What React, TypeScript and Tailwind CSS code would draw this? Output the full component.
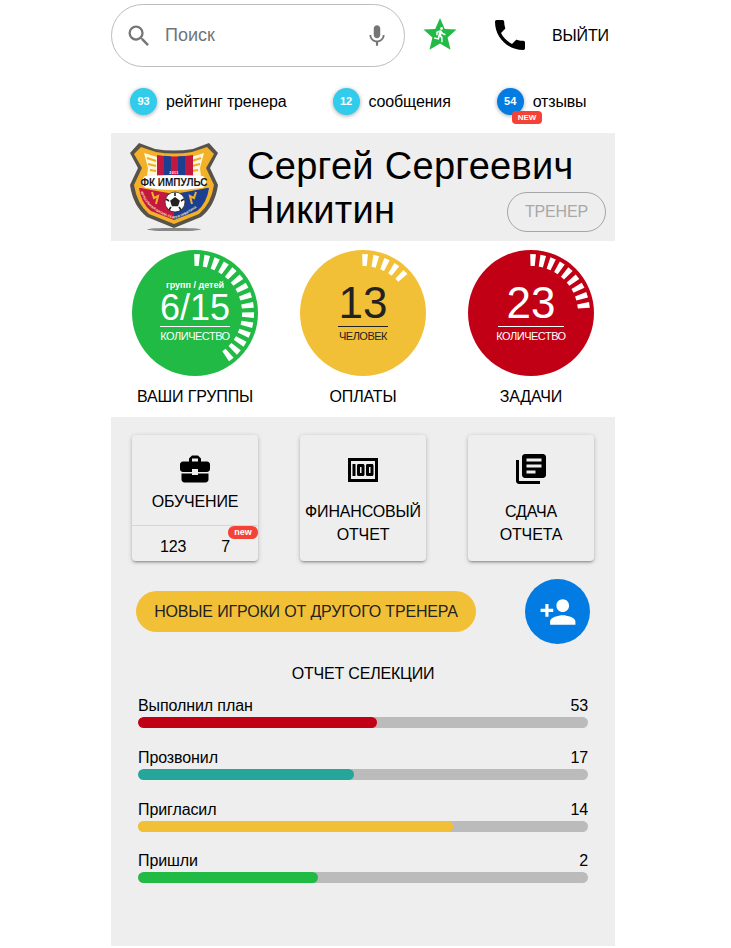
import React from "react";
import { MdSearch, MdMic, MdPhone, MdBusinessCenter, MdMoney, MdLibraryBooks, MdPersonAdd, MdDirectionsRun } from "react-icons/md";

function Ticks({ count, step, start = 2 }: { count: number; step: number; start?: number }) {
  const c = 63;
  const polys = Array.from({ length: count }, (_, i) => {
    const a = ((start + i * step) * Math.PI) / 180;
    const ux = Math.sin(a), uy = -Math.cos(a), px = Math.cos(a), py = Math.sin(a);
    const ro = 59, ri = 47, wo = 2.9, wi = 2.1;
    const pts = [
      [c + ux * ro - px * wo, c + uy * ro - py * wo],
      [c + ux * ro + px * wo, c + uy * ro + py * wo],
      [c + ux * ri + px * wi, c + uy * ri + py * wi],
      [c + ux * ri - px * wi, c + uy * ri - py * wi],
    ];
    return pts.map((p) => p.join(",")).join(" ");
  });
  return (
    <svg className="absolute inset-0" width="126" height="126" viewBox="0 0 126 126">
      {polys.map((p, i) => (
        <polygon key={i} points={p} fill="#fff" />
      ))}
    </svg>
  );
}

function Logo() {
  return (
    <svg width="100" height="100" viewBox="0 0 100 100">
      <ellipse cx="49" cy="91.5" rx="27" ry="1.6" fill="#444" opacity="0.6" />
      <path d="M14 5 L30 11 Q49 14 68 11 L84 5 L93 15 L85 30 L93 47 Q90 68 76 79 L49 90 L22 79 Q8 68 5 47 L13 30 L5 15 Z" fill="#57534a" />
      <path d="M16 9 L31 14 Q49 17 67 14 L82 9 L89 16 L81 30 L89 47 Q86 66 74 76 L49 86 L24 76 Q12 66 9 47 L17 30 L9 16 Z" fill="#f3b12a" />
      <path d="M19 15 L32 19 L32 38 L22 38 L23 30 Z M79 15 L66 19 L66 38 L76 38 L75 30 Z" fill="#fff6dc" />
      <path d="M22 20 L31 23 M23 26 L31 28 M25 32 L31 33 M76 20 L67 23 M75 26 L67 28 M73 32 L67 33" stroke="#f0ad24" strokeWidth="2.2" />
      <path d="M32 17 Q49 20 68 17 L68 38 L32 38 Z" fill="#c3173f" />
      <path d="M39 17.8 L46 18.4 L46 38 L39 38 Z M53 18.4 L60 17.9 L60 38 L53 38 Z" fill="#1c3f92" />
      <text x="49" y="35.5" textAnchor="middle" fontFamily="'Liberation Sans', sans-serif" fontWeight="700" fontSize="3.6" letterSpacing="0.4" fill="#fff">2011</text>
      <path d="M16 50 Q49 56 49 56 L49 82 L26 73 Q16 65 14 50 Z" fill="#c3173f" />
      <path d="M82 50 Q49 56 49 56 L49 82 L72 73 Q82 65 84 50 Z" fill="#1c3f92" />
      <path id="logo-arc" d="M15 52 Q20 72 49 81 Q78 72 83 52" fill="none" />
      <text fontFamily="'Liberation Sans', sans-serif" fontWeight="700" fontSize="3.3" fill="#f6e6b0">
        <textPath href="#logo-arc" startOffset="2%">ФУТБОЛЬНАЯ ШКОЛА СЕРГЕЯ НИКИТИНА</textPath>
      </text>
      <path d="M27 54 L29 60 L33 58 L31 66 M71 54 L69 60 L65 58 L67 66" stroke="#f3b12a" strokeWidth="2" fill="none" />
      <path d="M20 38 Q49 36 78 38 Q83 43 80 47 Q79 50 76 50 Q49 54 22 50 Q19 50 18 47 Q15 43 20 38 Z" fill="#fff" />
      <text x="49" y="47.5" textAnchor="middle" fontFamily="'Liberation Sans', sans-serif" fontWeight="700" fontSize="10" fill="#1a1a1a">ФК ИМПУЛЬС</text>
      <circle cx="50" cy="64" r="10" fill="#fff" stroke="#333" strokeWidth="0.8" />
      <path d="M50 60 L54 63 L52.5 67.5 L47.5 67.5 L46 63 Z M50 54.5 L50 58 M41 61 L44 63 M59 61 L56 63 M44 72 L46 69 M56 72 L54 69" fill="#222" stroke="#222" strokeWidth="1.6" />
    </svg>
  );
}

function Stat({ value, color, label }: { value: number; color: string; label: string }) {
  return (
    <div className="flex items-center">
      <span className={`flex h-[27px] w-[27px] items-center justify-center rounded-full text-[11px] font-bold text-white shadow-[0_1px_4px_rgba(0,0,0,0.35)] ${color}`}>
        {value}
      </span>
      <span className="ml-[9px] text-[16px] tracking-[-0.15px] text-black">{label}</span>
    </div>
  );
}

function Dial({ bg, fg, line, lineW, count, step, label, top, number, numberSize, caption }: {
  bg: string; fg: string; line: string; lineW: string; count: number; step: number; label: string; top?: string; number: string; numberSize: string; caption: string;
}) {
  return (
    <div className="flex w-[126px] flex-col items-center">
      <div className={`relative flex h-[126px] w-[126px] flex-col items-center rounded-full ${bg} ${fg}`}>
        <Ticks count={count} step={step} />
        <div className="mt-[30px]" />
        {top && <div className="h-[11px] text-[9px] font-bold leading-[11px] whitespace-nowrap">{top}</div>}
        <div className={`whitespace-nowrap ${top ? "h-[34px] leading-[34px]" : "h-[45px] leading-[45px]"} ${numberSize}`}>{number}</div>
        <div className={`mt-px h-px ${lineW} ${line}`} />
        <div className="mt-[3px] text-[11px] leading-[12px] tracking-[-0.5px] whitespace-nowrap">{caption}</div>
      </div>
      <div className="mt-[12px] text-[16px] leading-[18px] tracking-[-0.15px] whitespace-nowrap text-black">{label}</div>
    </div>
  );
}

function Card({ icon, children, footer }: { icon: React.ReactNode; children: React.ReactNode; footer?: boolean }) {
  return (
    <div className="relative flex h-[126px] w-[126px] flex-col items-center rounded-[4px] bg-[#eeeeee] text-[16px] tracking-[-0.15px] text-black shadow-[0_1px_5px_rgba(0,0,0,0.2),0_2px_2px_rgba(0,0,0,0.14),0_3px_1px_-2px_rgba(0,0,0,0.12)]">
      {icon}
      {children}
      {footer && (
        <>
          <div className="mt-[14px] h-px w-full bg-[#d6d6d6]" />
          <div className="flex w-full pt-[12px] leading-[18px]">
            <span className="ml-[28px]">123</span>
            <span className="ml-[35px]">7</span>
          </div>
          <span className="absolute right-0 top-[91px] flex h-[13px] w-[30px] items-center justify-center rounded-[6px] bg-[#f44336] text-[9px] font-bold tracking-normal text-white">new</span>
        </>
      )}
    </div>
  );
}

function Bar({ label, value, pct, color }: { label: string; value: number; pct: string; color: string }) {
  return (
    <div className="flex h-[51.8px] flex-col">
      <div className="flex h-[19px] justify-between text-[16px] leading-[19px] tracking-[-0.1px] text-black">
        <span>{label}</span>
        <span>{value}</span>
      </div>
      <div className="mt-[2px] h-[11px] overflow-hidden rounded-full bg-[#bbbbbb]">
        <div className={`h-full rounded-full ${color}`} style={{ width: pct }} />
      </div>
    </div>
  );
}

export default function App() {
  return (
    <div className="ml-[111px] flex min-h-[946px] w-[504px] flex-col bg-white font-['Liberation_Sans',Arial,sans-serif]">
      <div className="flex h-[88px] pt-[4px]">
        <div className="flex h-[63px] w-[294px] items-center rounded-full border border-[#bdbdbd] bg-white pl-[13px] pr-[14px]">
          <MdSearch size={28} className="text-[#757575]" />
          <span className="ml-[12px] text-[18px] text-[#70757a]">Поиск</span>
          <MdMic size={26} className="ml-auto text-[#757575]" />
        </div>
        <div className="relative ml-[18px] mt-[13px] h-[34px] w-[34px]">
          <svg width="34" height="34" viewBox="0 0 34 34">
            <polygon points="17,1 21.8,12 33.5,12.6 24.6,20.4 27.5,32.7 17,26.4 6.5,32.7 9.4,20.4 0.5,12.6 12.2,12" fill="#21ba45" />
          </svg>
          <MdDirectionsRun size={17} className="absolute left-[9px] top-[9px] text-white" />
        </div>
        <MdPhone size={40} className="ml-[33px] mt-[11px] text-black" />
        <span className="ml-[22px] mt-[22px] text-[16px] leading-[19px] tracking-[-0.15px] text-black">ВЫЙТИ</span>
      </div>

      <div className="relative flex h-[45px] items-start pl-[19px]">
        <Stat value={93} color="bg-[#31ccec]" label="рейтинг тренера" />
        <div className="ml-[46px]"><Stat value={12} color="bg-[#31ccec]" label="сообщения" /></div>
        <div className="ml-[46px]"><Stat value={54} color="bg-[#027be3]" label="отзывы" /></div>
        <span className="absolute left-[401px] top-[23px] flex h-[13px] w-[30px] items-center justify-center rounded-[4px] bg-[#f44336] text-[8px] font-bold text-white">NEW</span>
      </div>

      <div className="flex h-[108px] bg-[#eeeeee]">
        <div className="ml-[14px] mt-[5px] h-[100px] w-[100px]"><Logo /></div>
        <div className="relative ml-[22px] flex-1 pt-[11px] text-[38px] leading-[44px] tracking-[0.3px] text-black">
          <div className="whitespace-nowrap">Сергей Сергеевич</div>
          <div>Никитин</div>
          <span className="absolute right-[9px] top-[59px] flex h-[40px] w-[99px] items-center justify-center rounded-full border border-[#a5a5a5] text-[16px] tracking-[-0.15px] text-[#a8a8a8]">ТРЕНЕР</span>
        </div>
      </div>

      <div className="flex h-[176px] justify-between px-[21px] pt-[9px]">
        <Dial bg="bg-[#21ba45]" fg="text-white" line="bg-white" lineW="w-[70px]" count={15} step={10} label="ВАШИ ГРУППЫ" top="групп / детей" number="6/15" numberSize="text-[36px]" caption="КОЛИЧЕСТВО" />
        <Dial bg="bg-[#f2c037]" fg="text-[#222222]" line="bg-[#222222]" lineW="w-[50px]" count={5} step={11} label="ОПЛАТЫ" number="13" numberSize="text-[44px]" caption="ЧЕЛОВЕК" />
        <Dial bg="bg-[#c10015]" fg="text-white" line="bg-white" lineW="w-[66px]" count={9} step={10} label="ЗАДАЧИ" number="23" numberSize="text-[44px]" caption="КОЛИЧЕСТВО" />
      </div>

      <div className="flex flex-1 flex-col bg-[#eeeeee] pt-[18px]">
        <div className="flex justify-between px-[21px]">
          <Card icon={<MdBusinessCenter size={36} className="mt-[16px] text-black" />} footer>
            <div className="mt-[6px] leading-[18px]">ОБУЧЕНИЕ</div>
          </Card>
          <Card icon={<MdMoney size={36} className="mt-[17px] text-black" />}>
            <div className="mt-[12px] whitespace-nowrap text-center leading-[23px]">ФИНАНСОВЫЙ<br />ОТЧЕТ</div>
          </Card>
          <Card icon={<MdLibraryBooks size={36} className="mt-[16px] text-black" />}>
            <div className="mt-[13px] text-center leading-[23px]">СДАЧА<br />ОТЧЕТА</div>
          </Card>
        </div>

        <div className="mt-[18px] flex items-center pl-[25px]">
          <div className="flex h-[41px] w-[340px] items-center justify-center rounded-full bg-[#f2c037] text-[16px] tracking-[-0.16px] text-[#222222]">НОВЫЕ ИГРОКИ ОТ ДРУГОГО ТРЕНЕРА</div>
          <div className="ml-[49px] flex h-[65px] w-[65px] items-center justify-center rounded-full bg-[#027be3]">
            <MdPersonAdd size={38} className="text-white" />
          </div>
        </div>

        <div className="mt-[20px] text-center text-[16px] leading-[19px] tracking-[-0.2px] text-black">ОТЧЕТ СЕЛЕКЦИИ</div>

        <div className="mt-[13px] flex flex-col px-[27px]">
          <Bar label="Выполнил план" value={53} pct="53%" color="bg-[#c10015]" />
          <Bar label="Прозвонил" value={17} pct="48%" color="bg-[#26a69a]" />
          <Bar label="Пригласил" value={14} pct="70%" color="bg-[#f2c037]" />
          <Bar label="Пришли" value={2} pct="40%" color="bg-[#21ba45]" />
        </div>
      </div>
    </div>
  );
}
